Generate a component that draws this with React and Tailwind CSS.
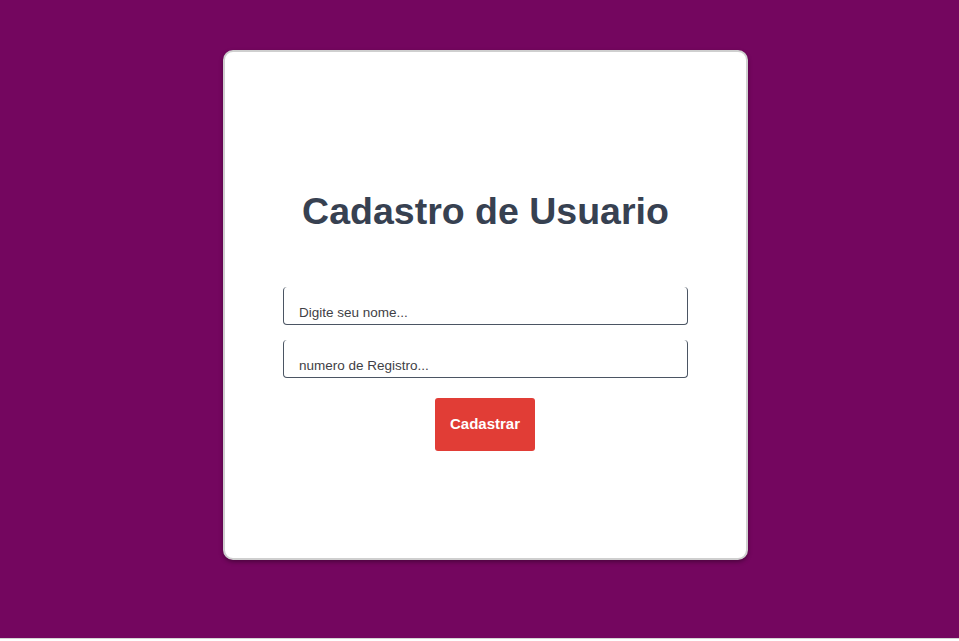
import React from 'react';

function App() {
  return (
    <div className="min-h-[641px] bg-white" style={{ fontFamily: '"Liberation Sans", Arial, sans-serif' }}>
      <div className="h-[638px] bg-[#74065f] pt-[50px]">
        <div className="ml-[223px] w-[525px] h-[510px] bg-white rounded-[10px] border-2 border-[#cfcfcf] shadow-[0_2px_4px_rgba(0,0,0,0.35)] flex flex-col items-center pt-[135px]">
          <h1 className="text-[37.5px] font-bold text-[#374151] leading-[48px]">Cadastro de Usuario</h1>

          <form className="mt-[52px] flex flex-col items-center" onSubmit={(e) => e.preventDefault()}>
            <input
              type="text"
              placeholder="Digite seu nome..."
              className="w-[405px] h-[38px] border border-t-0 border-[#4b5563] rounded-[4px] px-[15px] pt-[16px] pb-[3px] text-[13.5px] text-[#333] placeholder:text-[#3f3f46] outline-none"
            />
            <input
              type="text"
              placeholder="numero de Registro..."
              className="mt-[15px] w-[405px] h-[38px] border border-t-0 border-[#4b5563] rounded-[4px] px-[15px] pt-[16px] pb-[3px] text-[13.5px] text-[#333] placeholder:text-[#3f3f46] outline-none"
            />
            <button
              type="submit"
              className="mt-[20px] mr-[1px] w-[100px] h-[53px] bg-[#e13d36] rounded-[3px] text-white font-bold text-[15px]"
            >
              Cadastrar
            </button>
          </form>
        </div>
      </div>
      <div className="h-[1px] bg-[#d4d4d4]" />
    </div>
  );
}

export default App;
